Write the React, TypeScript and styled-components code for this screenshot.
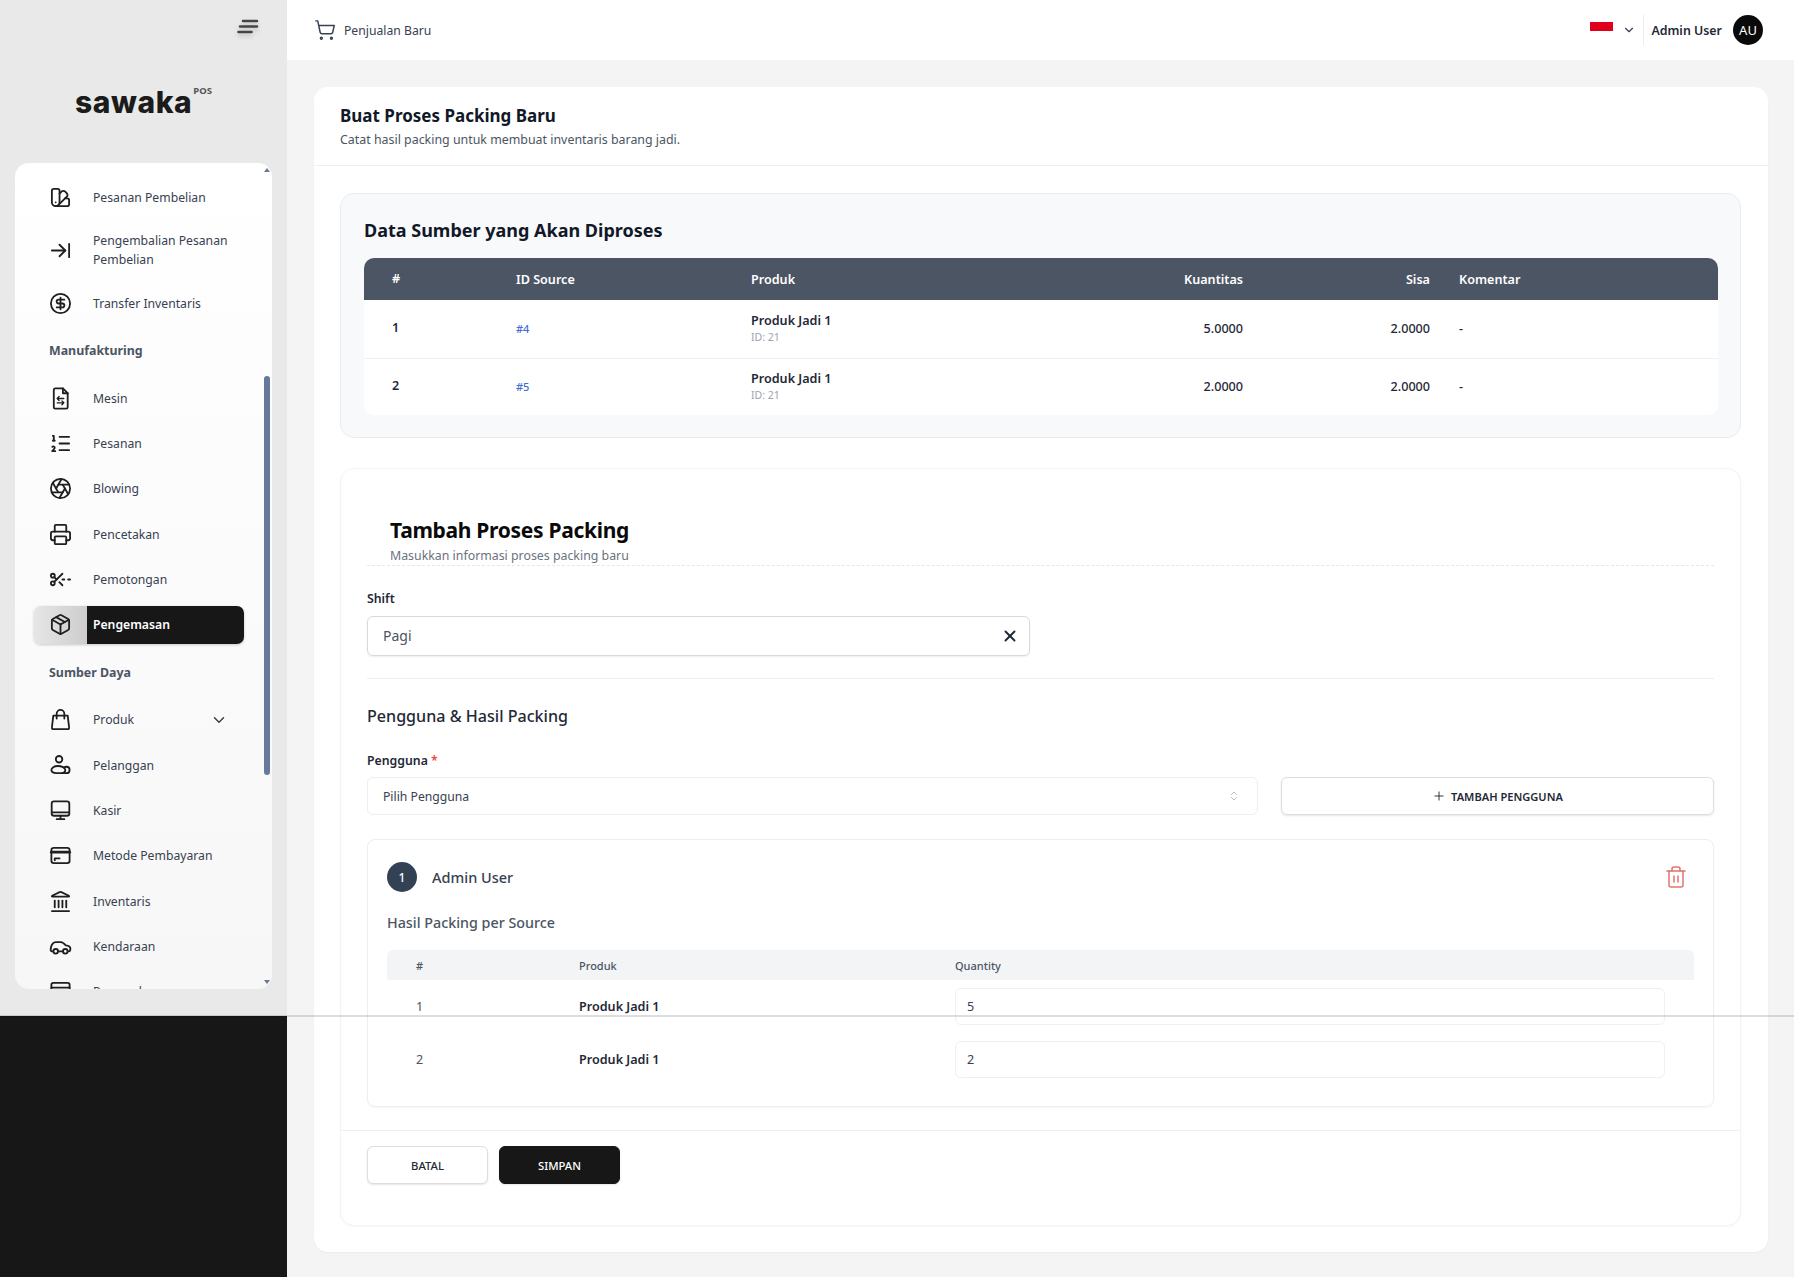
import React from "react";
import styled, { createGlobalStyle } from "styled-components";
import {
  SwatchBook,
  ArrowRightToLine,
  CircleDollarSign,
  ListOrdered,
  Aperture,
  Printer,
  ScissorsLineDashed,
  Package,
  Landmark,
  ChevronDown,
  ChevronsUpDown,
  ShoppingCart,
  Trash2,
  Plus,
  X,
} from "lucide-react";

const GlobalStyle = createGlobalStyle`
  html, body {
    margin: 0;
    padding: 0;
    background: #f4f4f4;
  }
  body {
    font-family: "Noto Sans", "Open Sans", sans-serif;
    color: #111827;
  }
  * {
    box-sizing: border-box;
  }
`;

const Page = styled.div`
  position: relative;
  display: flex;
  width: 1794px;
  height: 1277px;
  overflow: hidden;
`;

// thin line that crosses the whole page, sits over everything
const CrossLine = styled.div`
  position: absolute;
  left: 0;
  right: 0;
  top: 1015px;
  height: 1.5px;
  background: rgba(0, 0, 0, 0.13);
`;

const Sidebar = styled.aside`
  width: 287px;
  flex: none;
  display: flex;
  flex-direction: column;
  background: #171717;
`;

const SidebarTop = styled.div`
  height: 1016px;
  display: flex;
  flex-direction: column;
  background: #e9e9e9;
  padding: 0 15px 27px;
`;

const Burger = styled.div`
  height: 163px;
  flex: none;
  position: relative;
  display: flex;
  flex-direction: column;
  align-items: center;
  padding-top: 84px;
  svg.burger {
    position: absolute;
    right: 10px;
    top: 16px;
    filter: drop-shadow(0 3px 2px rgba(0, 0, 0, 0.18));
  }
`;

const Logo = styled.div`
  display: flex;
  align-items: flex-start;
`;

const LogoWord = styled.span`
  font-family: "Inter", sans-serif;
  font-size: 30px;
  line-height: 36px;
  font-weight: 800;
  color: #1b1b1b;
  letter-spacing: 0.6px;
`;

const LogoSup = styled.sup`
  font-family: "Noto Sans", sans-serif;
  font-size: 9.5px;
  line-height: 9px;
  font-weight: 700;
  color: #555;
  margin: 2px 0 0 1px;
  vertical-align: baseline;
`;

const MenuCard = styled.div`
  position: relative;
  flex: 1;
  overflow: hidden;
  width: 257px;
  border-radius: 14px;
  background: linear-gradient(#ffffff, #f7f7f7);
`;

const MenuScroll = styled.nav`
  padding: 15.5px 0 0 19px;
  width: 229px;
`;

const Section = styled.div`
  margin: 19px 0 18px 15px;
  height: 20px;
  font-size: 12.4px;
  line-height: 20px;
  font-weight: 700;
  color: #4b5563;
`;

const Item = styled.div<{ $active?: boolean }>`
  display: grid;
  grid-template-columns: 53px 1fr;
  align-items: stretch;
  width: 210px;
  min-height: 38px;
  margin-bottom: 7.35px;
  border-radius: 7px;
  overflow: hidden;
  ${(p) => p.$active && "box-shadow: 0 1px 3px rgba(0,0,0,.2);"}
`;

const ItemIcon = styled.div<{ $active?: boolean }>`
  display: flex;
  align-items: center;
  justify-content: center;
  color: #1f1f1f;
  ${(p) => p.$active && "background: linear-gradient(90deg, #e6e6e6, #cdcdcd);"}
`;

const ItemLabel = styled.div<{ $active?: boolean }>`
  display: flex;
  align-items: center;
  justify-content: space-between;
  padding: 7.5px 16px 7.5px 6px;
  font-size: 12.2px;
  line-height: 19px;
  color: ${(p) => (p.$active ? "#fff" : "#374151")};
  font-weight: ${(p) => (p.$active ? 600 : 400)};
  background: ${(p) => (p.$active ? "#171717" : "transparent")};
`;

const ScrollTrack = styled.div`
  position: absolute;
  right: 2px;
  top: 0;
  bottom: 0;
  width: 6px;
`;

const ScrollThumb = styled.div`
  position: absolute;
  left: 0;
  top: 213px;
  width: 6px;
  height: 399px;
  border-radius: 3px;
  background: #64799b;
`;

const ScrollArrow = styled.div<{ $down?: boolean }>`
  position: absolute;
  left: 0;
  ${(p) => (p.$down ? "bottom: 5px;" : "top: 5px;")}
  width: 0;
  height: 0;
  border-left: 3px solid transparent;
  border-right: 3px solid transparent;
  ${(p) =>
    p.$down ? "border-top: 4px solid #64799b;" : "border-bottom: 4px solid #64799b;"}
`;

const Main = styled.main`
  flex: 1;
  min-width: 0;
  display: flex;
  flex-direction: column;
`;

const TopBar = styled.header`
  height: 60px;
  flex: none;
  display: flex;
  align-items: center;
  justify-content: space-between;
  padding: 0 31px 0 27px;
  background: #fff;
`;

const TopLeft = styled.div`
  display: flex;
  align-items: center;
  gap: 8px;
  font-size: 12.2px;
  color: #374151;
`;

const TopRight = styled.div`
  display: flex;
  align-items: center;
`;

const Flag = styled.div`
  width: 23px;
  height: 19px;
  margin-top: 2px;
  background: linear-gradient(#e0001b 50%, #fff 50%);
`;

const LangCaret = styled.div`
  display: flex;
  margin: 0 7px 0 9px;
  color: #374151;
`;

const UserName = styled.div`
  height: 30px;
  display: flex;
  align-items: center;
  padding-left: 7px;
  border-left: 1px solid #ececec;
  font-size: 12.4px;
  font-weight: 600;
  color: #1f2937;
`;

const Avatar = styled.div`
  width: 30px;
  height: 30px;
  margin-left: 11px;
  border-radius: 50%;
  display: flex;
  align-items: center;
  justify-content: center;
  background: #0a0a0a;
  color: #fff;
  font-size: 13px;
`;

const Content = styled.div`
  flex: 1;
  padding: 27px 26px 25px 27px;
`;

const MainCard = styled.div`
  height: 100%;
  border-radius: 14px;
  background: #fff;
  box-shadow: 0 1px 2px rgba(0, 0, 0, 0.04);
`;

const CardHead = styled.div`
  height: 79px;
  padding: 16px 26px 0;
  border-bottom: 1px solid #efefef;
`;

const CardTitle = styled.h1`
  margin: 0;
  font-size: 17px;
  line-height: 26px;
  font-weight: 700;
  color: #111827;
`;

const CardSub = styled.p`
  margin: 0;
  font-size: 12.4px;
  line-height: 21px;
  color: #4b5563;
`;

const CardBody = styled.div`
  padding: 27px 27px 0 26px;
`;

const SourceBox = styled.section`
  height: 245px;
  padding: 22px 22px 0 23px;
  border: 1px solid #e9ecef;
  border-radius: 14px;
  background: #f8f9fb;
`;

const SourceTitle = styled.h2`
  margin: 0 0 14px;
  font-size: 18px;
  line-height: 28px;
  font-weight: 700;
  color: #111827;
`;

const SourceTable = styled.div`
  border-radius: 10px;
  background: #fff;
  overflow: hidden;
`;

const SourceRow = styled.div<{ $head?: boolean }>`
  display: grid;
  grid-template-columns: 152px 235px 346px 146px 187px 1fr;
  align-items: center;
  height: ${(p) => (p.$head ? "42px" : "57.5px")};
  background: ${(p) => (p.$head ? "#4b5563" : "#fff")};
  color: ${(p) => (p.$head ? "#fff" : "#1f2937")};
  font-size: 12.6px;
  font-weight: ${(p) => (p.$head ? 600 : 500)};
  & + & + & {
    border-top: 1px solid #f1f1f1;
  }
`;

const IndexCell = styled.div`
  padding-left: 28px;
  font-weight: 600;
  margin-top: -2px;
`;

const SourceId = styled.div`
  font-size: 11px;
  color: #3f6fd1;
`;

const HeadCell = styled.div<{ $right?: boolean }>`
  text-align: ${(p) => (p.$right ? "right" : "left")};
`;

const NoteCell = styled.div`
  padding-left: 29px;
`;

const ProductName = styled.div`
  font-size: 12.6px;
  line-height: 17px;
  font-weight: 600;
  color: #1f2937;
`;

const ProductId = styled.div`
  font-size: 10.5px;
  line-height: 16px;
  font-weight: 400;
  color: #9ca3af;
`;

const FormBox = styled.section`
  height: 758px;
  margin-top: 30px;
  border: 1px solid #f3f3f3;
  border-radius: 14px;
  background: #fff;
  box-shadow: 0 1px 2px rgba(0, 0, 0, 0.03);
`;

const FormHead = styled.div`
  margin: 0 26px;
  padding: 46px 0 0 23px;
  height: 97px;
  border-bottom: 1px dashed #e5e7eb;
`;

const FormTitle = styled.h2`
  margin: 0;
  font-size: 21px;
  line-height: 30px;
  font-weight: 700;
  letter-spacing: -0.3px;
  color: #0a0a0a;
`;

const FormSub = styled.p`
  margin: 1px 0 0;
  font-size: 12.35px;
  line-height: 19px;
  color: #6b7280;
`;

const FormBody = styled.div`
  padding: 24px 26px 0 26px;
`;

const Label = styled.label`
  display: block;
  height: 18px;
  font-size: 12.3px;
  line-height: 18px;
  font-weight: 600;
  color: #1f2937;
  span {
    color: #ef4444;
  }
`;

const ShiftBox = styled.div`
  width: 663px;
  height: 40px;
  margin-top: 8px;
  padding: 0 10px 1px 15px;
  display: flex;
  align-items: center;
  justify-content: space-between;
  border: 1px solid #d9d9d9;
  border-radius: 6px;
  box-shadow: 0 1px 2px rgba(0, 0, 0, 0.08);
  font-size: 14px;
  color: #4b5563;
  svg {
    color: #1f2937;
  }
`;

const Divider = styled.hr`
  height: 1px;
  margin: 22px 0 24px;
  border: 0;
  background: #eeeeee;
`;

const SubHeading = styled.h3`
  margin: 0 0 23px;
  font-size: 16.1px;
  line-height: 26px;
  font-weight: 500;
  color: #1f2937;
`;

const PickRow = styled.div`
  display: grid;
  grid-template-columns: 891px 433px;
  gap: 23px;
  margin-top: 7px;
`;

const PickSelect = styled.div`
  height: 38px;
  padding: 0 17px 0 15px;
  display: flex;
  align-items: center;
  justify-content: space-between;
  border: 1px solid #eeeeee;
  border-radius: 6px;
  font-size: 12.2px;
  color: #374151;
  svg {
    color: #9ca3af;
  }
`;

const OutlineButton = styled.button`
  height: 38px;
  display: flex;
  align-items: center;
  justify-content: center;
  gap: 5px;
  padding: 0;
  background: #fff;
  border: 1px solid #dedede;
  border-radius: 6px;
  box-shadow: 0 1px 2px rgba(0, 0, 0, 0.1);
  font-family: inherit;
  font-size: 11.1px;
  font-weight: 600;
  color: #1f2937;
`;

const UserCard = styled.div`
  height: 268px;
  margin-top: 24px;
  padding: 22px 19px 0 19px;
  border: 1px solid #eeeeee;
  border-radius: 8px;
  box-shadow: 0 1px 2px rgba(0, 0, 0, 0.03);
`;

const UserCardHead = styled.div`
  display: flex;
  align-items: center;
  justify-content: space-between;
  height: 30px;
  padding-right: 6px;
  svg {
    color: #e37272;
  }
`;

const UserTitle = styled.div`
  display: flex;
  align-items: center;
  gap: 15px;
  font-size: 14.5px;
  font-weight: 500;
  color: #374151;
`;

const Badge = styled.div`
  width: 30px;
  height: 30px;
  display: flex;
  align-items: center;
  justify-content: center;
  border-radius: 50%;
  background: #334155;
  color: #fff;
  font-size: 12px;
  font-weight: 500;
`;

const ResultHeading = styled.h4`
  margin: 19px 0 15px;
  font-size: 14.3px;
  line-height: 24px;
  font-weight: 500;
  color: #4b5563;
`;

const ResultRow = styled.div<{ $head?: boolean }>`
  display: grid;
  grid-template-columns: 192px 376px 1fr;
  align-items: center;
  height: ${(p) => (p.$head ? "30px" : "53px")};
  padding-right: 29px;
  background: ${(p) => (p.$head ? "#f3f4f6" : "transparent")};
  border-radius: ${(p) => (p.$head ? "6px 6px 0 0" : "0")};
  font-size: ${(p) => (p.$head ? "11px" : "12.6px")};
  font-weight: ${(p) => (p.$head ? 500 : 400)};
  color: #4b5563;
`;

const ResultIndex = styled.div`
  padding-left: 29px;
`;

const ResultName = styled.div`
  font-weight: 600;
  color: #1f2937;
`;

const QtyBox = styled.div`
  height: 37px;
  padding: 0 11px;
  display: flex;
  align-items: center;
  border: 1px solid #f0f0f0;
  border-radius: 6px;
  font-size: 12.6px;
  color: #374151;
`;

const FormFooter = styled.div`
  display: flex;
  gap: 11px;
  margin-top: 23px;
  padding: 15px 26px 0;
  border-top: 1px solid #f0f0f0;
`;

const FooterButton = styled.button<{ $primary?: boolean }>`
  width: 121px;
  height: 38px;
  padding: 0;
  border-radius: 6px;
  font-family: inherit;
  font-size: 11.3px;
  font-weight: 500;
  background: ${(p) => (p.$primary ? "#171717" : "#fff")};
  color: ${(p) => (p.$primary ? "#fff" : "#1f2937")};
  border: 1px solid ${(p) => (p.$primary ? "#171717" : "#dedede")};
  box-shadow: 0 1px 2px rgba(0, 0, 0, 0.1);
`;

const iconProps = { width: 23, height: 23, viewBox: "0 0 24 24", fill: "none", stroke: "currentColor", strokeWidth: 1.9, strokeLinecap: "round" as const, strokeLinejoin: "round" as const };

const FileSlidersIcon = () => (
  <svg {...iconProps}>
    <path d="M6.5 1.500h8l5 5V21a1.500 1.500 0 0 1-1.500 1.500H6.500A1.500 1.500 0 0 1 5 21V3a1.500 1.500 0 0 1 1.500-1.500z" />
    <path d="M14.500 1.500v5h5" />
    <path d="M8.500 12h7M10.500 10l-2 2 2 2M8.500 16.500h7M13.500 14.500l2 2-2 2" strokeWidth={1.4} />
  </svg>
);

const BagIcon = () => (
  <svg {...iconProps}>
    <path d="M4.500 8h15L21 20.500c.1.700-.4 1.500-1.200 1.500H4.200c-.8 0-1.300-.8-1.200-1.500L4.500 8z" />
    <path d="M8 11V6a4 4 0 0 1 8 0v5" />
  </svg>
);

const CustomerIcon = () => (
  <svg {...iconProps}>
    <circle cx="10.500" cy="5.500" r="3.400" />
    <path d="M9 12.500c-3.500 0-6.500 1.800-6.500 4.300s2.500 3.200 5.500 3.200h5c2.600 0 4-1 4-3.200 0-2.500-3.800-4.300-8-4.300z" />
    <path d="M15.500 14c.8-.5 1.800-.7 2.600-.7 2 0 3.400 1.500 3.400 3.300s-1.400 3.400-3.400 3.400h-4" />
  </svg>
);

const KasirIcon = () => (
  <svg {...iconProps}>
    <rect x="2.800" y="2.500" width="18.400" height="15" rx="2.500" />
    <path d="M3 14h18M12 17.500v3M8 21h8" />
  </svg>
);

const CardIcon = () => (
  <svg {...iconProps}>
    <rect x="2.500" y="4" width="19" height="16" rx="2.500" />
    <path d="M2.500 8.500h19" strokeWidth={3} />
    <path d="M6 15h5M6 15v2" />
  </svg>
);

const CarIcon = () => (
  <svg {...iconProps}>
    <path d="M4 17H3c-.8 0-1.300-.6-1.300-1.300 0-4 1.800-8.200 5.300-8.200h5.500c2 0 3.800 2 5 3.400 2 .3 4.800 1 4.800 3.100 0 1.500-.5 3-1.500 3h-1" />
    <path d="M10 17h4" />
    <circle cx="7" cy="17" r="2.400" />
    <circle cx="17" cy="17" r="2.400" />
  </svg>
);

const RowsIcon = () => (
  <svg {...iconProps}>
    <rect x="2.500" y="3" width="19" height="18" rx="2" />
    <path d="M2.500 8h19" />
  </svg>
);

const lucide = { size: 23, strokeWidth: 1.9 };

type MenuEntry =
  | { section: string }
  | { label: string; icon: React.ReactNode; active?: boolean; caret?: boolean };

const menu: MenuEntry[] = [
  { label: "Pesanan Pembelian", icon: <SwatchBook {...lucide} /> },
  { label: "Pengembalian Pesanan Pembelian", icon: <ArrowRightToLine {...lucide} /> },
  { label: "Transfer Inventaris", icon: <CircleDollarSign {...lucide} /> },
  { section: "Manufakturing" },
  { label: "Mesin", icon: <FileSlidersIcon /> },
  { label: "Pesanan", icon: <ListOrdered {...lucide} /> },
  { label: "Blowing", icon: <Aperture {...lucide} /> },
  { label: "Pencetakan", icon: <Printer {...lucide} /> },
  { label: "Pemotongan", icon: <ScissorsLineDashed {...lucide} /> },
  { label: "Pengemasan", icon: <Package {...lucide} />, active: true },
  { section: "Sumber Daya" },
  { label: "Produk", icon: <BagIcon />, caret: true },
  { label: "Pelanggan", icon: <CustomerIcon /> },
  { label: "Kasir", icon: <KasirIcon /> },
  { label: "Metode Pembayaran", icon: <CardIcon /> },
  { label: "Inventaris", icon: <Landmark {...lucide} /> },
  { label: "Kendaraan", icon: <CarIcon /> },
  { label: "Pemasok", icon: <RowsIcon /> },
];

const sources = [
  { no: 1, id: "#4", qty: "5.0000", left: "2.0000" },
  { no: 2, id: "#5", qty: "2.0000", left: "2.0000" },
];

const results = [
  { no: 1, qty: "5" },
  { no: 2, qty: "2" },
];

export default function App() {
  return (
    <Page>
      <GlobalStyle />
      <Sidebar>
        <SidebarTop>
          <Burger>
            <svg className="burger" width="26" height="22" viewBox="0 0 26 22" fill="none" stroke="#444" strokeWidth="2.6" strokeLinecap="round">
              <path d="M7 5h14M4 10.500h17M2.500 16h13" />
            </svg>
            <Logo>
              <LogoWord>sawaka</LogoWord>
              <LogoSup>POS</LogoSup>
            </Logo>
          </Burger>
          <MenuCard>
            <MenuScroll>
              {menu.map((entry) =>
                "section" in entry ? (
                  <Section key={entry.section}>{entry.section}</Section>
                ) : (
                  <Item key={entry.label} $active={entry.active}>
                    <ItemIcon $active={entry.active}>{entry.icon}</ItemIcon>
                    <ItemLabel $active={entry.active}>
                      {entry.label}
                      {entry.caret && <ChevronDown size={18} strokeWidth={2} />}
                    </ItemLabel>
                  </Item>
                )
              )}
            </MenuScroll>
            <ScrollTrack>
              <ScrollArrow />
              <ScrollThumb />
              <ScrollArrow $down />
            </ScrollTrack>
          </MenuCard>
        </SidebarTop>
      </Sidebar>
      <Main>
        <TopBar>
          <TopLeft>
            <ShoppingCart size={22} strokeWidth={1.6} />
            Penjualan Baru
          </TopLeft>
          <TopRight>
            <Flag />
            <LangCaret>
              <ChevronDown size={14} strokeWidth={2} />
            </LangCaret>
            <UserName>Admin User</UserName>
            <Avatar>AU</Avatar>
          </TopRight>
        </TopBar>
        <Content>
          <MainCard>
            <CardHead>
              <CardTitle>Buat Proses Packing Baru</CardTitle>
              <CardSub>Catat hasil packing untuk membuat inventaris barang jadi.</CardSub>
            </CardHead>
            <CardBody>
              <SourceBox>
                <SourceTitle>Data Sumber yang Akan Diproses</SourceTitle>
                <SourceTable>
                  <SourceRow $head>
                    <IndexCell>#</IndexCell>
                    <HeadCell>ID Source</HeadCell>
                    <HeadCell>Produk</HeadCell>
                    <HeadCell $right>Kuantitas</HeadCell>
                    <HeadCell $right>Sisa</HeadCell>
                    <NoteCell>Komentar</NoteCell>
                  </SourceRow>
                  {sources.map((row) => (
                    <SourceRow key={row.no}>
                      <IndexCell>{row.no}</IndexCell>
                      <SourceId>{row.id}</SourceId>
                      <div>
                        <ProductName>Produk Jadi 1</ProductName>
                        <ProductId>ID: 21</ProductId>
                      </div>
                      <HeadCell $right>{row.qty}</HeadCell>
                      <HeadCell $right>{row.left}</HeadCell>
                      <NoteCell>-</NoteCell>
                    </SourceRow>
                  ))}
                </SourceTable>
              </SourceBox>
              <FormBox>
                <FormHead>
                  <FormTitle>Tambah Proses Packing</FormTitle>
                  <FormSub>Masukkan informasi proses packing baru</FormSub>
                </FormHead>
                <FormBody>
                  <Label>Shift</Label>
                  <ShiftBox>
                    Pagi
                    <X size={18} strokeWidth={2.6} />
                  </ShiftBox>
                  <Divider />
                  <SubHeading>Pengguna &amp; Hasil Packing</SubHeading>
                  <Label>
                    Pengguna <span>*</span>
                  </Label>
                  <PickRow>
                    <PickSelect>
                      Pilih Pengguna
                      <ChevronsUpDown size={12} strokeWidth={1.5} />
                    </PickSelect>
                    <OutlineButton>
                      <Plus size={14} strokeWidth={1.6} />
                      TAMBAH PENGGUNA
                    </OutlineButton>
                  </PickRow>
                  <UserCard>
                    <UserCardHead>
                      <UserTitle>
                        <Badge>1</Badge>
                        Admin User
                      </UserTitle>
                      <Trash2 size={24} strokeWidth={1.5} />
                    </UserCardHead>
                    <ResultHeading>Hasil Packing per Source</ResultHeading>
                    <ResultRow $head>
                      <ResultIndex>#</ResultIndex>
                      <div>Produk</div>
                      <div>Quantity</div>
                    </ResultRow>
                    {results.map((row) => (
                      <ResultRow key={row.no}>
                        <ResultIndex>{row.no}</ResultIndex>
                        <ResultName>Produk Jadi 1</ResultName>
                        <QtyBox>{row.qty}</QtyBox>
                      </ResultRow>
                    ))}
                  </UserCard>
                </FormBody>
                <FormFooter>
                  <FooterButton>BATAL</FooterButton>
                  <FooterButton $primary>SIMPAN</FooterButton>
                </FormFooter>
              </FormBox>
            </CardBody>
          </MainCard>
        </Content>
      </Main>
      <CrossLine />
    </Page>
  );
}
